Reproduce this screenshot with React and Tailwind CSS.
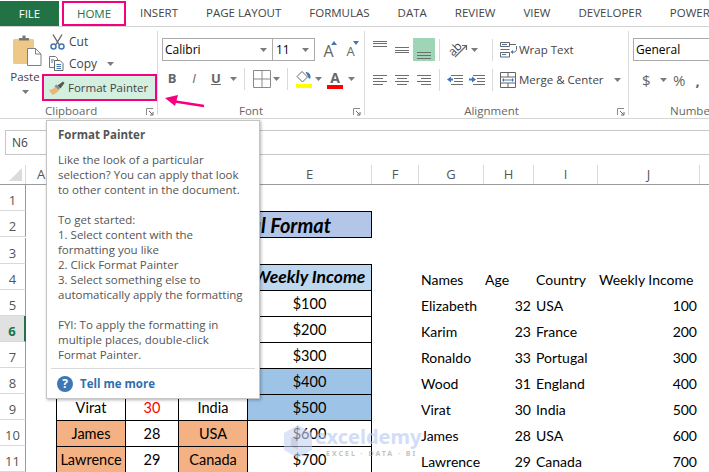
import React from 'react';

const uiFont = "font-['Open_Sans',sans-serif]";
const cellFont = "font-['Lato',sans-serif]";

const tabs = ['INSERT', 'PAGE LAYOUT', 'FORMULAS', 'DATA', 'REVIEW', 'VIEW', 'DEVELOPER', 'POWER'];

const tooltipLines = [
  'Like the look of a particular',
  'selection? You can apply that look',
  'to other content in the document.',
  '',
  'To get started:',
  '1. Select content with the',
  'formatting you like',
  '2. Click Format Painter',
  '3. Select something else to',
  'automatically apply the formatting',
  '',
  'FYI: To apply the formatting in',
  'multiple places, double-click',
  'Format Painter.',
];

const columns = [
  ['A', 'w-[31px]'],
  ['B', 'w-[69px]'],
  ['C', 'w-[53px]'],
  ['D', 'w-[69px]'],
  ['E', 'w-[124px]'],
  ['F', 'w-[47px]'],
  ['G', 'w-[65px]'],
  ['H', 'w-[50px]'],
  ['I', 'w-[64px]'],
  ['J', 'w-[102px]'],
];

const people = [
  ['Elizabeth', 32, 'USA', 100],
  ['Karim', 23, 'France', 200],
  ['Ronaldo', 33, 'Portugal', 300],
  ['Wood', 31, 'England', 400],
  ['Virat', 30, 'India', 500],
  ['James', 28, 'USA', 600],
  ['Lawrence', 29, 'Canada', 700],
];

function Caret({ className = '' }) {
  return (
    <svg width="7" height="4" viewBox="0 0 7 4" className={`shrink-0 ${className}`}>
      <path d="M0 0h7L3.500 4z" fill="#7b7b7b" />
    </svg>
  );
}

function Launcher({ className = '' }) {
  return (
    <svg width="8" height="8" viewBox="0 0 8 8" className={className}>
      <path d="M0.500 7V0.500H7" fill="none" stroke="#8a8a8a" />
      <path d="M3 3l3.500 3.500M7 4v3H4" fill="none" stroke="#666" />
    </svg>
  );
}

function Sep({ className = '' }) {
  return <div className={`w-px h-[22px] shrink-0 bg-[#d9d9d9] ${className}`} />;
}

function PasteIcon() {
  return (
    <svg width="29" height="31" viewBox="0 0 29 31">
      <rect x="0" y="4" width="21" height="25" rx="1.500" fill="#edc887" />
      <path d="M6 5V3h3.500V0.500h3V3H16v2.500H6z" fill="#777" />
      <path d="M14.500 13.500h8l5.500 5.500v11.500h-13.500z" fill="#fff" stroke="#808080" />
      <path d="M22.500 13.500v5.500h5.500" fill="none" stroke="#808080" />
    </svg>
  );
}

function CutIcon() {
  return (
    <svg width="15" height="16" viewBox="0 0 15 16">
      <path d="M3 0.500l6 10M12 0.500l-6 10" stroke="#666" strokeWidth="1.400" fill="none" />
      <circle cx="3.500" cy="12.500" r="2.500" fill="none" stroke="#3f76b5" strokeWidth="1.500" />
      <circle cx="11.500" cy="12.500" r="2.500" fill="none" stroke="#3f76b5" strokeWidth="1.500" />
    </svg>
  );
}

function CopyIcon() {
  return (
    <svg width="15" height="15" viewBox="0 0 15 15">
      <path d="M0.500 0.500h6l2 2v9h-8z" fill="#fff" stroke="#777" />
      <path d="M5.500 4.500h5.500l3 3v7h-8.500z" fill="#fff" stroke="#666" />
      <path d="M7.500 8.500h4.500M7.500 10.500h4.500M7.500 12.500h4.500M2 4h3M2 6h2" stroke="#3f76b5" />
    </svg>
  );
}

function BrushIcon() {
  return (
    <svg width="17" height="14" viewBox="0 0 17 14">
      <path d="M0 8.500c3 1 4.500-1 6-3l4 4c-2 2-5 4-6 4.500-1-0.500-3-3-4-5.500z" fill="#e5b778" />
      <path d="M5.500 5l2-1.500 3.500 3.500-1.500 2z" fill="#8d8d8d" />
      <path d="M8.500 4.500L14 0.500l1.500 1.500-4 5.500z" fill="#555" />
    </svg>
  );
}

function GrowFont({ small }) {
  return (
    <div className={`relative w-[17px] h-[22px] flex items-end justify-center ${uiFont} text-[#666] ${small ? 'text-[13px]' : 'text-[16px]'} leading-[20px]`}>
      A
      <svg width="6" height="4" viewBox="0 0 6 4" className="absolute right-0 top-[2px]">
        <path d={small ? 'M0 0h6L3 4z' : 'M0 4h6L3 0z'} fill="#3f76b5" />
      </svg>
    </div>
  );
}

function BordersIcon() {
  return (
    <svg width="18" height="18" viewBox="0 0 18 18">
      <path d="M0.500 0.500h17v17h-17zM9 0.500v17M0.500 9h17" fill="none" stroke="#8a8a8a" />
    </svg>
  );
}

function FillIcon() {
  return (
    <svg width="16" height="19" viewBox="0 0 16 19">
      <path d="M1 6.500L6 1.500l5.500 5.500-5 5z" fill="#fff" stroke="#666" />
      <path d="M9.500 2c3 0 5.500 2 5 6l-1.500 1-1-2.500z" fill="#3f76b5" />
      <rect x="0" y="14" width="16" height="4" fill="#ffff00" />
    </svg>
  );
}

// lines are [x1, x2, y]
function LinesIcon({ lines, width = 15, height = 14, className = '', children }) {
  return (
    <svg width={width} height={height} viewBox={`0 0 ${width} ${height}`} className={className}>
      {lines.map(([a, b, y]) => (
        <path key={`${a}-${b}-${y}`} d={`M${a} ${y + 0.5}H${b}`} stroke="#6e6e6e" />
      ))}
      {children}
    </svg>
  );
}

function WrapIcon() {
  return (
    <svg width="17" height="16" viewBox="0 0 17 16">
      <path d="M0.500 0.500h9v4h-9zM0.500 10.500h9v4.500h-9z" fill="none" stroke="#666" />
      <path d="M0.500 7.500h9M2 2.500h5M2 12.500h4" stroke="#3f76b5" />
      <path d="M9 2.500h7M16.500 4v3.500c0 1-1 2.500-2 2.500h-2" fill="none" stroke="#666" />
      <path d="M13 8v4l-2.500-2z" fill="#3f76b5" />
    </svg>
  );
}

function MergeIcon() {
  return (
    <svg width="16" height="16" viewBox="0 0 16 16">
      <path d="M0.500 0.500h15v15h-15zM0.500 5h15M0.500 11h15M8 0.500V5M8 11v4.500" fill="none" stroke="#666" />
      <path d="M3 8h10" stroke="#3f76b5" />
      <path d="M2 8l2-2v4zM14 8l-2-2v4z" fill="#3f76b5" />
    </svg>
  );
}

function GroupLabel({ className = '', children }) {
  return <div className={`h-[16px] -mb-[4px] text-[11.500px] leading-[16px] text-[#666] whitespace-nowrap ${className}`}>{children}</div>;
}

function Group({ width, label, labelClass = '', launcher, children }) {
  return (
    <div className={`${width} h-[84px] my-1 border-r border-[#d9d9d9] flex flex-col shrink-0 relative`}>
      <div className="flex-1 min-h-0">{children}</div>
      <GroupLabel className={labelClass}>{label}</GroupLabel>
      {launcher && <Launcher className="absolute right-[3px] -bottom-[1px]" />}
    </div>
  );
}

function Ribbon() {
  return (
    <div className={`flex h-[92px] border-b border-[#d4d4d4] overflow-hidden ${uiFont}`}>
      <Group width="w-[158px]" label="Clipboard" labelClass="pl-[45px]" launcher>
        <div className="flex h-[70px]">
          <div className="w-[42px] flex flex-col items-center shrink-0 pl-[8px]">
            <div className="mt-[4px] ml-[5px]"><PasteIcon /></div>
            <div className="text-[11.500px] leading-[16px] mt-[3px] text-[#444]">Paste</div>
            <Caret className="mt-[5px]" />
          </div>
          <div className="flex-1 text-[12px] text-[#444]">
            <div className="h-[22px] flex items-center pl-[8px] gap-[4px]"><CutIcon /> Cut</div>
            <div className="h-[21px] flex items-center pl-[7px] gap-[5px]">
              <CopyIcon /> Copy <Caret className="ml-[5px]" />
            </div>
            <div className="h-[27px] border-2 border-[#f5007f] bg-[#d2efe0] flex items-center pl-[5px] gap-[2px] relative whitespace-nowrap">
              <BrushIcon /> <span className="text-[11.500px]">Format Painter</span>
            </div>
          </div>
        </div>
      </Group>

      <Group width="w-[207px]" label="Font" labelClass="text-center pr-[20px]" launcher>
        <div className="pt-[7px] pl-[4px]">
          <div className="flex items-center h-[23px]">
            <div className="w-[111px] h-[23px] border border-[#ababab] flex items-center justify-between pl-[2px] pr-[5px] text-[12px] text-black">
              Calibri <Caret />
            </div>
            <div className="w-[43px] -ml-px h-[23px] border border-[#ababab] flex items-center justify-between pl-[3px] pr-[5px] text-[12px] text-black">
              11 <Caret />
            </div>
            <div className="ml-[5px]"><GrowFont /></div>
            <div className="ml-[5px]"><GrowFont small /></div>
          </div>
          <div className="flex items-center h-[22px] mt-[7px] -ml-[1px] text-[#666]">
            <div className="w-[22px] text-center font-bold text-[13px]">B</div>
            <div className="w-[22px] text-center italic text-[13px]">I</div>
            <div className="w-[22px] text-center underline font-bold text-[13px]">U</div>
            <Caret className="ml-[3px]" />
            <Sep className="ml-[7px]" />
            <div className="ml-[8px]"><BordersIcon /></div>
            <Caret className="ml-[2px]" />
            <Sep className="ml-[7px]" />
            <div className="ml-[8px]"><FillIcon /></div>
            <Caret className="ml-[3px]" />
            <div className="ml-[5px] w-[16px] flex flex-col items-center">
              <span className="font-bold text-[14px] leading-[15px]">A</span>
              <span className="w-full h-[4px] bg-[#f00]" />
            </div>
            <Caret className="ml-[5px]" />
          </div>
        </div>
      </Group>

      <Group width="w-[264px]" label="Alignment" labelClass="text-center pr-[10px]" launcher>
        <div className="pt-[7px] pl-[4px] text-[11.500px] text-[#444]">
          <div className="flex items-center h-[23px]">
            <div className="w-[22px] h-[23px] flex justify-center pt-[2px]">
              <LinesIcon height={8} lines={[[0, 14, 1], [0, 14, 3], [0, 14, 6]]} />
            </div>
            <div className="w-[22px] h-[23px] flex justify-center items-center">
              <LinesIcon height={8} lines={[[0, 14, 1], [0, 14, 4], [0, 14, 6]]} />
            </div>
            <div className="w-[22px] h-[23px] flex justify-center items-end pb-[2px] bg-[#9fd5b7]">
              <LinesIcon height={8} lines={[[0, 14, 1], [0, 14, 4], [0, 14, 7]]} />
            </div>
            <Sep className="ml-[4px]" />
            <div className="ml-[7px] w-[24px] h-[18px] relative">
              <span className="absolute left-[1px] top-0 text-[12px] leading-[16px] -rotate-45">ab</span>
              <svg width="24" height="18" viewBox="0 0 24 18" className="absolute left-0 top-0">
                <path d="M8 16L19 5M15 4.500h4.500V9" fill="none" stroke="#666" strokeWidth="1.200" />
              </svg>
            </div>
            <Caret />
            <Sep className="ml-[14px]" />
            <div className="ml-[7px]"><WrapIcon /></div>
            <span className="ml-[2px] whitespace-nowrap">Wrap Text</span>
          </div>
          <div className="flex items-center h-[22px] mt-[8px]">
            <div className="w-[22px] flex justify-center">
              <LinesIcon height={10} lines={[[0, 14, 0], [0, 10, 3], [0, 14, 6], [0, 10, 9]]} />
            </div>
            <div className="w-[22px] flex justify-center">
              <LinesIcon height={10} lines={[[0, 14, 0], [2, 12, 3], [0, 14, 6], [2, 12, 9]]} />
            </div>
            <div className="w-[22px] flex justify-center">
              <LinesIcon height={10} lines={[[0, 14, 0], [4, 14, 3], [0, 14, 6], [4, 14, 9]]} />
            </div>
            <Sep className="ml-[4px]" />
            <div className="ml-[7px]">
              <LinesIcon width={16} height={10} lines={[[4, 16, 0], [7, 16, 3], [7, 16, 6], [4, 16, 9]]}>
                <path d="M0 4.500l4-3v2h2v2H4v2z" fill="#3f76b5" />
              </LinesIcon>
            </div>
            <div className="ml-[6px]">
              <LinesIcon width={16} height={10} lines={[[4, 16, 0], [8, 16, 3], [8, 16, 6], [4, 16, 9]]}>
                <path d="M7 4.500l-4-3v2H0v2h3v2z" fill="#3f76b5" />
              </LinesIcon>
            </div>
            <Sep className="ml-[7px]" />
            <div className="ml-[7px]"><MergeIcon /></div>
            <span className="ml-[3px] whitespace-nowrap">Merge &amp; Center</span>
            <Caret className="ml-[10px]" />
          </div>
        </div>
      </Group>

      <div className="flex-1 min-w-0 h-[84px] my-1 flex flex-col text-[#555]">
        <div className="flex-1 pt-[7px] pl-[4px]">
          <div className="w-[100px] h-[23px] border border-[#ababab] flex items-center pl-[2px] text-[12px] text-black">General</div>
          <div className="flex items-center h-[22px] mt-[8px] pl-[9px] text-[#666]">
            <span className="text-[15px] w-[12px]">$</span>
            <Caret className="ml-[6px]" />
            <span className="text-[15px] ml-[6px]">%</span>
            <span className="text-[15px] font-bold ml-[10px]">,</span>
          </div>
        </div>
        <GroupLabel className="pl-[41px]">Number</GroupLabel>
      </div>
    </div>
  );
}

function Cell({ bg = '', last, right, className = '', children }) {
  return (
    <div
      className={`${right} border-l border-t border-black flex items-center justify-center shrink-0 ${bg} ${last ? 'h-[27px] border-b' : 'h-[26px]'} ${right === 'w-[125px]' ? 'border-r' : ''} ${className}`}
    >
      {children}
    </div>
  );
}

function RowHead({ n }) {
  const active = n === 6;
  return (
    <div
      className={`w-[26px] h-[26px] shrink-0 flex items-end justify-center pb-[1px] border-b border-[#d9d9d9] border-r ${uiFont} text-[13px] leading-[18px] ${
        active ? 'bg-[#e1e1e1] border-r-2 border-r-[#217346] text-[#217346] font-bold' : 'border-r-[#9b9b9b] text-[#555]'
      }`}
    >
      {n}
    </div>
  );
}

function PlainCols({ row }) {
  const header = !row;
  return (
    <div className="flex items-end h-[26px] pb-[1px] text-[14px] leading-[18px] text-black">
      <span className="w-[46px] shrink-0" />
      <span className="w-[64px] pl-[3px] shrink-0 whitespace-nowrap">{header ? 'Names' : row[0]}</span>
      <span className={`w-[51px] pl-[3px] pr-[2px] shrink-0 ${header ? '' : 'text-right'}`}>{header ? 'Age' : row[1]}</span>
      <span className="w-[63px] pl-[3px] shrink-0 whitespace-nowrap">{header ? 'Country' : row[2]}</span>
      <span className={`w-[103px] pl-[3px] pr-[2px] shrink-0 whitespace-nowrap ${header ? '' : 'text-right'}`}>{header ? 'Weekly Income' : row[3]}</span>
    </div>
  );
}

function Sheet() {
  return (
    <div className={cellFont}>
      <div className={`flex h-[20px] border-b border-[#9b9b9b] text-[13px] text-[#555] ${uiFont}`}>
        <div className="w-[26px] shrink-0 flex items-center justify-end pr-[3px] border-r border-[#d9d9d9]">
          <svg width="13" height="13" viewBox="0 0 13 13">
            <path d="M13 0v13H0z" fill="#dcdcdc" />
          </svg>
        </div>
        {columns.map(([name, w]) => (
          <div key={name} className={`${w} shrink-0 flex items-center justify-center border-r border-[#d9d9d9]`}>{name}</div>
        ))}
      </div>

      <div className="flex"><RowHead n={1} /></div>
      <div className="flex">
        <RowHead n={2} />
        <div className="w-[30px] shrink-0" />
        <div className="w-[316px] h-[27px] shrink-0 border border-black bg-[#b4c6e7] flex items-center justify-center pr-[8px] italic font-bold text-[20px] whitespace-nowrap">
          Applying Conditional Format
        </div>
      </div>
      <div className="flex"><RowHead n={3} /></div>
      <div className="flex">
        <RowHead n={4} />
        <div className="w-[30px] shrink-0" />
        <Cell right="w-[69px]" bg="bg-[#bdd7ee]">Names</Cell>
        <Cell right="w-[53px]" bg="bg-[#bdd7ee]">Age</Cell>
        <Cell right="w-[69px]" bg="bg-[#bdd7ee]">Country</Cell>
        <Cell right="w-[125px]" bg="bg-[#bdd7ee]" className="italic font-bold text-[17.500px] whitespace-nowrap">Weekly Income</Cell>
        <PlainCols />
      </div>
      {people.map((p, i) => {
        const last = i === people.length - 1;
        const orange = p[3] >= 600 ? 'bg-[#f4b183]' : '';
        return (
          <div className="flex text-[14.500px]" key={p[0]}>
            <RowHead n={i + 5} />
            <div className="w-[30px] shrink-0" />
            <Cell right="w-[69px]" bg={orange} last={last}>{p[0]}</Cell>
            <Cell right="w-[53px]" last={last} className={p[1] === 30 ? 'text-[#f00]' : ''}>{p[1]}</Cell>
            <Cell right="w-[69px]" bg={orange} last={last}>{p[2]}</Cell>
            <Cell right="w-[125px]" bg={p[3] === 400 || p[3] === 500 ? 'bg-[#9dc3e6]' : ''} last={last}>${p[3]}</Cell>
            <PlainCols row={p} />
          </div>
        );
      })}
    </div>
  );
}

function Tooltip() {
  return (
    <div className={`absolute left-[46px] top-[120px] w-[214px] h-[279px] bg-white border border-[#c4c4c4] shadow-[1px_1px_3px_rgba(0,0,0,0.3)] flex flex-col ${uiFont} text-[#555]`}>
      <div className="pl-[11px] pt-[6px] text-[11.500px] leading-[16px] font-bold">Format Painter</div>
      <div className="pl-[11px] pt-[9px] text-[11.500px] leading-[15px] whitespace-nowrap">
        {tooltipLines.map((line, i) => (
          <div key={i} className="h-[15px]">{line}</div>
        ))}
      </div>
      <div className="mt-auto mx-[4px] border-t border-[#d9d9d9] h-[30px] flex items-center pl-[6px] gap-[7px]">
        <span className="w-[16px] h-[16px] rounded-full bg-[#3f76b5] text-white font-bold text-[12px] leading-[16px] text-center">?</span>
        <span className="text-[#2f6fb0] font-bold text-[11.500px]">Tell me more</span>
      </div>
    </div>
  );
}

function Watermark() {
  return (
    <div className="absolute left-[283px] top-[425px] flex opacity-60 pointer-events-none">
      <svg width="30" height="34" viewBox="0 0 30 34" className="shrink-0">
        <path d="M15 0l14 8v17l-14 8L1 25V8z" fill="#c6d3f2" />
        <path d="M8 13l7-4v16l-7-4z" fill="#aab4cc" />
      </svg>
      <div className="ml-[2px] font-['Noto_Sans',sans-serif]">
        <div className="text-[#b5c8f5] font-bold text-[20px] leading-[24px]">exceldemy</div>
        <div className="text-[#9a9a9a] font-bold text-[7px] leading-[10px] tracking-[2px] pl-[11px] whitespace-nowrap">EXCEL · DATA · BI</div>
      </div>
    </div>
  );
}

export default function App() {
  return (
    <div className="relative w-[709px] h-[472px] bg-white overflow-hidden">
      <div className={`flex h-[27px] border-b border-[#d4d4d4] text-[11.500px] text-[#444] whitespace-nowrap ${uiFont}`}>
        <div className="w-[59px] shrink-0 mt-[1px] bg-[#217346] text-white flex items-center justify-center">FILE</div>
        <div className="ml-[3px] w-[64px] shrink-0 h-[25px] mt-px border-2 border-[#f5007f] text-[#217346] flex items-center justify-center">HOME</div>
        <div className="flex items-center gap-[28px] ml-[14px]">
          {tabs.map((t) => <span key={t}>{t}</span>)}
        </div>
      </div>

      <Ribbon />

      <div className={`flex items-center mt-[11px] ml-[5px] h-[25px] border border-r-0 border-[#c6c6c6] pl-[6px] text-[12px] text-[#444] ${uiFont}`}>N6</div>

      <div className="mt-[10px]">
        <Sheet />
      </div>

      <svg width="44" height="14" viewBox="0 0 44 14" className="absolute left-[164px] top-[95px]">
        <path d="M40 11L11 6.500" stroke="#f5007f" strokeWidth="2.500" fill="none" />
        <path d="M1 3l13-3-3 11z" fill="#f5007f" />
      </svg>

      <Tooltip />
      <Watermark />
    </div>
  );
}
